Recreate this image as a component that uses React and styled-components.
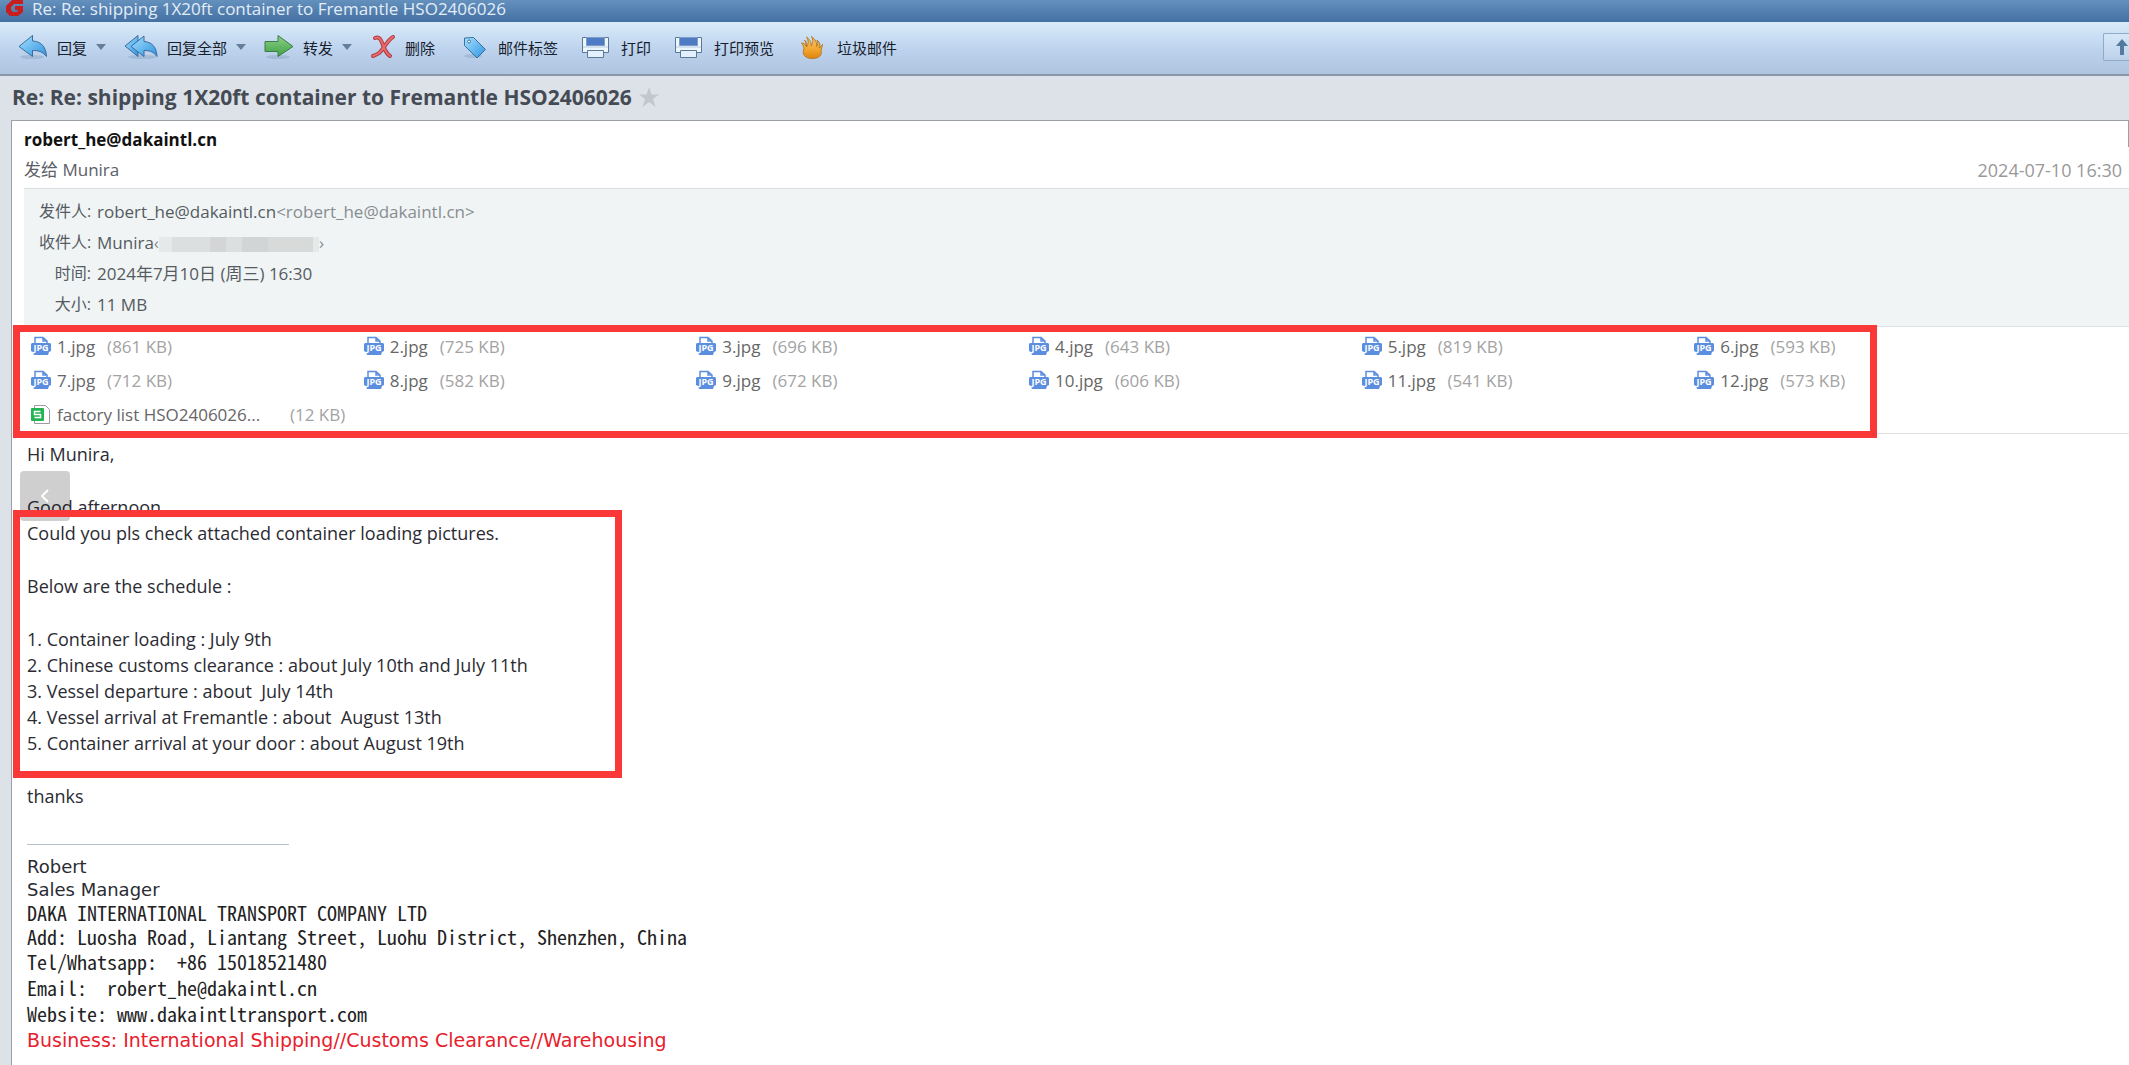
import styled, { createGlobalStyle } from "styled-components";

const files = [
    ["1.jpg", "861 KB"], ["2.jpg", "725 KB"], ["3.jpg", "696 KB"], ["4.jpg", "643 KB"],
    ["5.jpg", "819 KB"], ["6.jpg", "593 KB"], ["7.jpg", "712 KB"], ["8.jpg", "582 KB"],
    ["9.jpg", "672 KB"], ["10.jpg", "606 KB"], ["11.jpg", "541 KB"], ["12.jpg", "573 KB"],
];

const LogoIcon = ()=>(
    <svg width="18" height="18" viewBox="0 0 18 18">
        <path d="M17 0v4H8L5 7v3l2 2h4l1-2H9V6h8v6l-5 4H4l-4-4V6l6-6z" fill="#c81f1e" />
    </svg>
);
const BlueFill = ({ id })=>(
    <defs>
        <linearGradient id={id} x1="0" y1="0" x2="1" y2="1">
            <stop offset="0" stopColor="#a6e0ff" />
            <stop offset="1" stopColor="#2e93df" />
        </linearGradient>
    </defs>
);
const ReplyIcon = ()=>(
    <svg width="30" height="28" viewBox="0 0 30 28">
        <BlueFill id="reply" />
        <ellipse cx="14" cy="24" rx="12" ry="2" fill="#8fa8c4" opacity=".5" />
        <path d="M1 13.500 14.500 2.500v5.500c9 .5 13.500 6 14 15.500-4-5-8-6-14-6v6z" fill="url(#reply)" stroke="#3a6c9e" strokeLinejoin="round" />
    </svg>
);
const ReplyAllIcon = ()=>(
    <svg width="34" height="28" viewBox="0 0 34 28">
        <BlueFill id="replyAll" />
        <ellipse cx="18" cy="24" rx="14" ry="2" fill="#8fa8c4" opacity=".5" />
        <path d="M1 13 14 2.500v21z" fill="url(#replyAll)" stroke="#3a6c9e" strokeLinejoin="round" />
        <path d="M7 13.500 20 3v5.500c8 .5 12.500 5.500 13 15-4-5-7-6-13-6v6z" fill="url(#replyAll)" stroke="#3a6c9e" strokeLinejoin="round" />
    </svg>
);
const ForwardIcon = ()=>(
    <svg width="30" height="28" viewBox="0 0 30 28">
        <defs>
            <linearGradient id="forward" x1="0" y1="0" x2="0" y2="1">
                <stop offset="0" stopColor="#8fd18a" />
                <stop offset="1" stopColor="#3fa043" />
            </linearGradient>
        </defs>
        <ellipse cx="14" cy="24" rx="12" ry="2" fill="#8fa8c4" opacity=".5" />
        <path d="M1 8.500h13V2.500l15 11-15 10v-5H1z" fill="url(#forward)" stroke="#3c7c45" strokeLinejoin="round" />
    </svg>
);
const DeleteIcon = ()=>(
    <svg width="26" height="28" viewBox="0 0 26 28">
        <path d="M5 5c5-2 6 2 8 7 2 6 4 9 7 11M23 4c-4 2-8 9-12 14-2 3-5 4-8 5" fill="none" stroke="#b03a42" strokeWidth="4" strokeLinecap="round" />
        <path d="M5 5c5-2 6 2 8 7 2 6 4 9 7 11M23 4c-4 2-8 9-12 14-2 3-5 4-8 5" fill="none" stroke="#ea6a6c" strokeWidth="2" strokeLinecap="round" />
    </svg>
);
const TagIcon = ()=>(
    <svg width="36" height="28" viewBox="0 0 36 28">
        <BlueFill id="tag" />
        <ellipse cx="20" cy="23" rx="9" ry="2" fill="#8fa8c4" opacity=".5" />
        <path d="M11.500 5v7.500L24 25l8.500-8.500L20.500 4.500z" fill="url(#tag)" stroke="#37719f" strokeLinejoin="round" />
        <circle cx="16" cy="8.500" r="1.500" fill="#fff" stroke="#37719f" />
    </svg>
);
const PrintIcon = ()=>(
    <svg width="36" height="28" viewBox="0 0 36 28">
        <path d="M6.500 4.500h26v15h-26z" fill="#eef6fd" stroke="#5d7896" />
        <path d="M10.500 4.500h18v8h-18z" fill="#4f7bc4" stroke="#7d9cc8" />
        <path d="M7 14h25" stroke="#b9cbe0" />
        <path d="M11.500 17.500h16v7h-16z" fill="#e2f1fc" stroke="#5d7896" />
    </svg>
);
const FireIcon = ()=>(
    <svg width="36" height="28" viewBox="0 0 36 28">
        <defs>
            <linearGradient id="fire" x1="0" y1="0" x2="0" y2="1">
                <stop offset="0" stopColor="#f5c97a" />
                <stop offset=".6" stopColor="#f3a52c" />
                <stop offset="1" stopColor="#dc8512" />
            </linearGradient>
        </defs>
        <path d="M12.500 7c2 2 2.500 4 2 7 2-3 2.500-6 0-10 4 3 5 6 4.500 9 2-3 2.500-6 .5-9.500 4 3 5.500 6 5 10 1.500-2 1.500-4 .5-6.500 3 3 3.500 5 2 8 1.500-1 2.500-2 3.500-3.500 0 2-1 4-1.500 5.500 1.500 5-2 8.500-8.500 8.500-7.500 0-11-4.500-8.500-9.500 0-2-1-4-2.500-6 2 0 3.500 1 4.500 3 0-2 0-4-1.500-6z" fill="url(#fire)" stroke="#b87b24" strokeLinejoin="round" />
    </svg>
);
const CaretIcon = ()=>(
    <svg width="10" height="8" viewBox="0 0 10 8">
        <path d="M0 1h10L5 7z" fill="#667d9b" />
    </svg>
);
const JpgIcon = ()=>(
    <svg width="20" height="20" viewBox="0 0 20 20">
        <path d="M4 8V1.500h8L16 5v3M12 1.500V5h4" fill="none" stroke="#5c8ee0" strokeWidth="1.500" />
        <path d="M1 7h18l1 1v7l-2 1-1 3H3l-1-3-2-1V8z" fill="#5c8ee0" />
        <text x="10" y="15" textAnchor="middle" fontFamily="Open Sans" fontWeight="700" fontSize="9" fill="#fff">JPG</text>
    </svg>
);
const SheetIcon = ()=>(
    <svg width="20" height="20" viewBox="0 0 20 20">
        <path d="M3.500 4V1.500h11l4 4v14h-15V17" fill="#fff" stroke="#9a9da3" />
        <rect x="0" y="4" width="13" height="13" rx="1" fill="#22b352" />
        <path d="M9.500 7.500h-6v3h6v3h-6" fill="none" stroke="#fff" strokeWidth="1.500" />
    </svg>
);

const tools = [
    { label: "回复", Icon: ReplyIcon, menu: true },
    { label: "回复全部", Icon: ReplyAllIcon, menu: true },
    { label: "转发", Icon: ForwardIcon, menu: true },
    { label: "删除", Icon: DeleteIcon },
    { label: "邮件标签", Icon: TagIcon },
    { label: "打印", Icon: PrintIcon },
    { label: "打印预览", Icon: PrintIcon },
    { label: "垃圾邮件", Icon: FireIcon },
];

const App = ()=>{
    return(
        <Window>
            <GlobalStyle />
            <TitleBar>
                <LogoIcon />
                <span>Re: Re: shipping 1X20ft container to Fremantle HSO2406026</span>
            </TitleBar>
            <ToolBar>
                {tools.map(({ label, Icon, menu })=>(
                    <ToolBtn key={label}>
                        <Icon />
                        <span>{label}</span>
                        {menu && <CaretIcon />}
                    </ToolBtn>
                ))}
                <UpBtn aria-label="上一封">
                    <svg width="14" height="18" viewBox="0 0 14 18">
                        <path d="M7 1l6 7H9v9H5V8H1z" fill="#557a9f" />
                    </svg>
                </UpBtn>
            </ToolBar>
            <SubjectBar>
                <h1>Re: Re: shipping 1X20ft container to Fremantle HSO2406026</h1>
                <StarBtn aria-label="星标">
                    <svg width="22" height="22" viewBox="0 0 22 22">
                        <path d="M11 1l2.500 7.500H21l-6 4.500 2.500 8-6.500-5-6.500 5L7 13 1 8.500h7.500z" fill="#c3c6ce" />
                    </svg>
                </StarBtn>
            </SubjectBar>
            <Mail>
                <Header>
                    <Sender>robert_he@dakaintl.cn</Sender>
                    <SentTo>
                        <span>发给 Munira</span>
                        <time>2024-07-10 16:30</time>
                    </SentTo>
                </Header>
                <Details>
                    <dt>发件人:</dt>
                    <dd>robert_he@dakaintl.cn<Address>&lt;robert_he@dakaintl.cn&gt;</Address></dd>
                    <dt>收件人:</dt>
                    <dd>Munira<Address>‹<Redacted />›</Address></dd>
                    <dt>时间:</dt>
                    <dd>2024年7月10日 (周三) 16:30</dd>
                    <dt>大小:</dt>
                    <dd>11 MB</dd>
                </Details>
                <Attachments>
                    {files.map(([name, size])=>(
                        <FileLink key={name} href="#">
                            <JpgIcon />
                            <span>{name}</span>
                            <FileSize>({size})</FileSize>
                        </FileLink>
                    ))}
                    <FileLink href="#">
                        <SheetIcon />
                        <LongName>factory list HSO2406026...</LongName>
                        <FileSize>(12 KB)</FileSize>
                    </FileLink>
                    <FilesMark />
                </Attachments>
                <Message>
                    <p>Hi Munira,</p>
                    <Greeting>
                        <p>Good afternoon,</p>
                        <PrevBtn aria-label="上一页">
                            <svg width="10" height="14" viewBox="0 0 10 14">
                                <path d="M8 1L2 7l6 6" fill="none" stroke="#fff" strokeWidth="2" />
                            </svg>
                        </PrevBtn>
                    </Greeting>
                    <Schedule>
                        <p>Could you pls check attached container loading pictures.</p>
                        <p>Below are the schedule :</p>
                        <ol>
                            <li>1. Container loading : July 9th</li>
                            <li>2. Chinese customs clearance : about July 10th and July 11th</li>
                            <li>3. Vessel departure : about  July 14th</li>
                            <li>4. Vessel arrival at Fremantle : about  August 13th</li>
                            <li>5. Container arrival at your door : about August 19th</li>
                        </ol>
                        <ScheduleMark />
                    </Schedule>
                    <p>thanks</p>
                    <Rule />
                    <Name>Robert</Name>
                    <Name>Sales Manager</Name>
                    <Company>DAKA INTERNATIONAL TRANSPORT COMPANY LTD</Company>
                    <Company>Add: Luosha Road, Liantang Street, Luohu District, Shenzhen, China</Company>
                    <Contacts>
                        <li>Tel/Whatsapp:  +86 15018521480</li>
                        <li>Email:  robert_he@dakaintl.cn</li>
                        <li>Website: www.dakaintltransport.com</li>
                    </Contacts>
                    <Business>Business: International Shipping//Customs Clearance//Warehousing</Business>
                </Message>
            </Mail>
        </Window>
    );
};
export default App


const GlobalStyle = createGlobalStyle`
* {
    box-sizing: border-box;
}
body, h1, p, dl, dd, ol, ul {
    margin: 0;
    padding: 0;
}
ol, ul {
    list-style: none;
}
button {
    padding: 0;
    border: none;
    background: none;
    font: inherit;
    color: inherit;
    cursor: pointer;
}
svg {
    display: block;
    flex: none;
}
`
const Window = styled.div`
min-height: 100vh;
display: flex;
flex-direction: column;
background-color: #dce2e8;
font-family: "Open Sans", "Noto Sans CJK SC", sans-serif;
font-size: 17px;
overflow: hidden;
`
const TitleBar = styled.div`
height: 22px;
display: flex;
padding-left: 6px;
gap: 8px;
background: linear-gradient(#6390bc, #4470a3);
color: #e3edf7;
line-height: 17px;
white-space: nowrap;
`
const ToolBar = styled.div`
height: 54px;
display: flex;
align-items: center;
gap: 18px;
padding: 0 0 2px 18px;
border-bottom: 2px solid #8796aa;
background: linear-gradient(#d8ebfb, #bad0eb 60%, #aec4df);
`
const ToolBtn = styled.button`
display: flex;
align-items: center;
gap: 9px;
font-size: 15px;
color: #16202c;
white-space: nowrap;
`
const UpBtn = styled.button`
width: 26px;
height: 28px;
display: flex;
align-items: center;
justify-content: flex-end;
margin-left: auto;
border: 1px solid #8fabc8;
border-right: none;
border-radius: 2px 0 0 2px;
background: linear-gradient(#d6e8f8, #bcd1ea);
`
const SubjectBar = styled.div`
height: 44px;
display: flex;
align-items: center;
gap: 6px;
padding: 0 0 2px 12px;
h1{
    font-size: 21px;
    font-weight: 700;
    color: #454b54;
    white-space: nowrap;
}
`
const StarBtn = styled.button`
width: 22px;
height: 22px;
`
const Mail = styled.main`
flex: 1;
margin-left: 11px;
border-top: 1px solid #9b9fa6;
border-left: 1px solid #9b9fa6;
background-color: #fff;
`
const Header = styled.header`
height: 67px;
padding: 4px 7px 0 12px;
background: linear-gradient(#9b9fa6, #9b9fa6) right top / 1px 26px no-repeat;
`
const Sender = styled.div`
line-height: 30px;
font-weight: 700;
color: #111;
`
const SentTo = styled.div`
display: flex;
justify-content: space-between;
line-height: 30px;
color: #5b6068;
time{
    font-size: 18px;
    color: #999;
}
`
const Details = styled.dl`
display: grid;
grid-template-columns: 52px 1fr;
column-gap: 6px;
margin-left: 12px;
padding: 7px 0 6px 15px;
border-top: 1px solid #d9e0e2;
border-bottom: 1px solid #dfe3e5;
background-color: #f0f4f4;
line-height: 31px;
color: #555b62;
dt{
    font-size: 16px;
    text-align: right;
    white-space: nowrap;
}
`
const Address = styled.span`
color: #888d92;
`
const Redacted = styled.span`
display: inline-block;
width: 160px;
height: 15px;
vertical-align: middle;
background: linear-gradient(90deg, #e6e9e9 0 8%, #dcdfdf 8% 32%, #d3d5d6 32% 42%, #dcdfdf 42% 52%, #d2d5d6 52% 68%, #d8dada 68% 96%, #e6e9e9 96%);
`
const Attachments = styled.section`
position: relative;
display: grid;
grid-template-columns: repeat(6, 1fr);
padding: 2px 102px 2px 19px;
border-bottom: 1px solid #e3e3e3;
`
const FileLink = styled.a`
height: 34px;
display: flex;
align-items: center;
gap: 6px;
color: #666;
text-decoration: none;
white-space: nowrap;
`
const LongName = styled.span`
width: 221px;
`
const FileSize = styled.span`
margin-left: 6px;
color: #a3a3a3;
`
const Mark = styled.div`
position: absolute;
border: 7px solid #fa3838;
pointer-events: none;
`
const FilesMark = styled(Mark)`
top: -2px;
bottom: -5px;
left: 1px;
right: 252px;
`
const Message = styled.article`
padding: 7px 15px 8px;
font-size: 18px;
line-height: 26px;
color: #2b2b33;
white-space: pre-wrap;
`
const Greeting = styled.div`
position: relative;
margin-top: 27px;
`
const PrevBtn = styled.button`
position: absolute;
left: -7px;
top: -23px;
width: 50px;
height: 50px;
display: flex;
align-items: center;
justify-content: center;
border-radius: 4px;
background-color: rgba(0, 0, 0, 0.19);
`
const Schedule = styled.section`
position: relative;
margin-bottom: 27px;
p, ol{
    margin-bottom: 27px;
}
`
const ScheduleMark = styled(Mark)`
top: -10px;
bottom: -22px;
left: -14px;
width: 609px;
`
const Rule = styled.hr`
width: 262px;
height: 1px;
margin: 35px 0 10px;
border: none;
background-color: #b6c4d2;
`
const Name = styled.p`
font-family: "DejaVu Sans", sans-serif;
line-height: 23px;
`
const Company = styled.p`
font-family: "Noto Sans Mono CJK SC", "Liberation Mono", monospace;
font-size: 20px;
line-height: 24px;
color: #222;
`
const Contacts = styled.ul`
font-family: "Noto Sans Mono CJK SC", "Liberation Mono", monospace;
font-size: 20px;
color: #222;
`
const Business = styled.p`
font-family: "DejaVu Sans", sans-serif;
font-size: 19px;
line-height: 26px;
color: #e8202c;
`
